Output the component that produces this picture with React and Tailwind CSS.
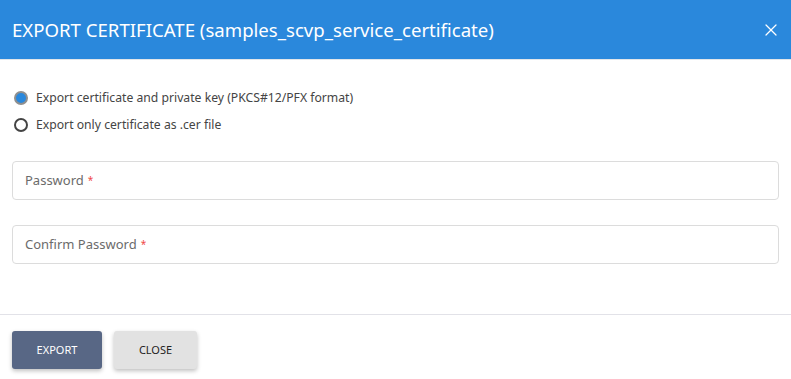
import { X } from "lucide-react";

const Field = ({ label }) => (
  <div className="h-[39px] border border-[#dcdcdc] rounded-[4px] flex items-center px-3 text-[13px] text-[#6b6b6b]">
    <span>{label}</span>
    <span className="text-[#f04848] text-[10px] ml-1">*</span>
  </div>
);

export default function App() {
  return (
    <div className="w-[791px] h-[379px] bg-white flex flex-col font-['Noto_Sans',sans-serif]">
      <div className="h-[60px] bg-[#2a88dc] border-b border-[#e2e6ea] flex items-center justify-between pl-3 pr-[10px] text-white">
        <h1 className="text-[18.6px]">EXPORT CERTIFICATE (samples_scvp_service_certificate)</h1>
        <X className="w-5 h-5" strokeWidth={1.5} />
      </div>

      <div className="flex flex-col pt-[29px] px-3 text-[12.2px] text-[#444]">
        <label className="flex items-center gap-2 h-[18px] ml-0.5">
          <span className="w-[14px] h-[14px] rounded-full bg-[#2a88dc] border-2 border-[#8f8f8f]" />
          <span>Export certificate and private key (PKCS#12/PFX format)</span>
        </label>
        <label className="flex items-center gap-2 h-[18px] ml-0.5 mt-[9px]">
          <span className="w-[14px] h-[14px] rounded-full border-2 border-[#444]" />
          <span>Export only certificate as .cer file</span>
        </label>

        <div className="mt-[27px] flex flex-col gap-[25px]">
          <Field label="Password" />
          <Field label="Confirm Password" />
        </div>
      </div>

      <div className="mt-[50px] border-t border-[#e2e2e8] flex gap-3 px-3 pt-[16px]">
        <button className="w-[90px] h-[38px] rounded-[3px] bg-[#586785] text-white text-[11px] shadow-[0_2px_4px_rgba(0,0,0,0.25)]">
          EXPORT
        </button>
        <button className="w-[83px] h-[38px] rounded-[3px] bg-[#e2e2e2] text-[#222] text-[11px] shadow-[0_2px_4px_rgba(0,0,0,0.25)]">
          CLOSE
        </button>
      </div>
    </div>
  );
}
